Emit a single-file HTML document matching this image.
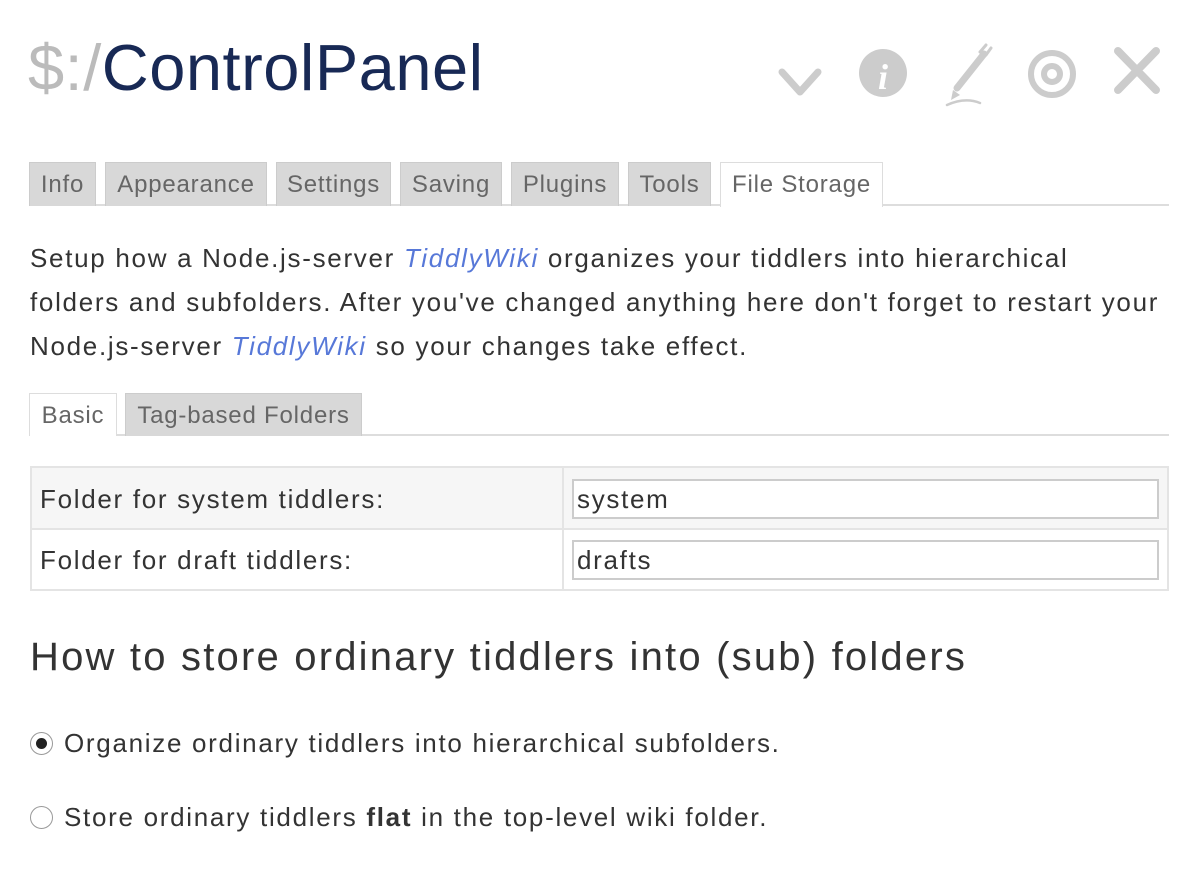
<!DOCTYPE html>
<html><head><meta charset="utf-8"><style>
*{box-sizing:border-box;margin:0;padding:0}
body{width:1194px;height:894px;background:#fff;font-family:"Liberation Sans",sans-serif;color:#333;position:relative;overflow:hidden}
.a{position:absolute;white-space:nowrap}
.tab{position:absolute;top:162px;height:44px;background:#d8d8d8;border:1px solid #ccc;border-bottom:none;font-size:24px;color:#666;line-height:44px;text-align:center;letter-spacing:0.8px}
.tab.sel{background:#fff;border-color:#ddd;height:45px}
.p{font-size:26px;color:#333;line-height:44px;letter-spacing:1.7px}
.lnk{color:#5778d8;font-style:italic}
</style></head><body>
<div class="a" style="left:28px;top:28px;font-size:65px;line-height:80px;letter-spacing:0.5px"><span style="color:#bbb">$:/</span><span style="color:#182955">ControlPanel</span></div>
<svg class="a" style="left:770px;top:40px" width="400" height="70" viewBox="0 0 400 70">
<g fill="none" stroke="#ccc" stroke-linecap="round" stroke-linejoin="round">
<path d="M12 32 L30 52 L48 32" stroke-width="7"/>
<path d="M187 48 L214 14" stroke-width="7"/>
<path d="M210 12 L216 5 M216 15 L221 8" stroke-width="3"/>
<path d="M177 65 Q195 57 210 63" stroke-width="2.5"/>
<circle cx="282" cy="34" r="21" stroke-width="6"/>
<circle cx="282" cy="34" r="8" stroke-width="6"/>
<path d="M348 11 L386 50 M386 11 L348 50" stroke-width="8"/>
</g>
<circle cx="113" cy="33" r="24" fill="#ccc"/>
<text x="113" y="49" font-family="Liberation Serif" font-style="italic" font-weight="bold" font-size="36" fill="#fff" text-anchor="middle">i</text>
<path d="M183 50 L190 55 L181 60 Z" fill="#ccc"/>
</svg>
<div class="a" style="left:29px;top:204px;width:1140px;height:2px;background:#ddd"></div>
<div class="tab" style="left:29px;width:67px">Info</div>
<div class="tab" style="left:105px;width:162px">Appearance</div>
<div class="tab" style="left:276px;width:115px">Settings</div>
<div class="tab" style="left:400px;width:102px">Saving</div>
<div class="tab" style="left:511px;width:108px">Plugins</div>
<div class="tab" style="left:628px;width:83px">Tools</div>
<div class="tab sel" style="left:720px;width:163px">File Storage</div>
<div class="a p" style="left:30px;top:236px">Setup how a Node.js-server <span class="lnk">TiddlyWiki</span> organizes your tiddlers into hierarchical</div>
<div class="a p" style="left:30px;top:280px">folders and subfolders. After you've changed anything here don't forget to restart your</div>
<div class="a p" style="left:30px;top:324px">Node.js-server <span class="lnk">TiddlyWiki</span> so your changes take effect.</div>
<div class="a" style="left:29px;top:434px;width:1140px;height:2px;background:#ddd"></div>
<div class="tab sel" style="left:29px;top:393px;width:88px;height:43px;line-height:44px">Basic</div>
<div class="tab" style="left:125px;top:393px;width:237px;height:43px;line-height:44px">Tag-based Folders</div>
<div class="a" style="left:30px;top:466px;width:1139px;height:125px;border:2px solid #e4e4e4"></div>
<div class="a" style="left:32px;top:468px;width:1135px;height:60px;background:#f6f6f6"></div>
<div class="a" style="left:32px;top:528px;width:1135px;height:2px;background:#e4e4e4"></div>
<div class="a" style="left:562px;top:468px;width:2px;height:121px;background:#e4e4e4"></div>
<div class="a p" style="left:40px;top:477px">Folder for system tiddlers:</div>
<div class="a p" style="left:40px;top:538px">Folder for draft tiddlers:</div>
<div class="a p" style="left:572px;top:479px;width:587px;height:40px;border:2px solid #ccc;background:#fff;line-height:36px;padding-left:3px">system</div>
<div class="a p" style="left:572px;top:540px;width:587px;height:40px;border:2px solid #ccc;background:#fff;line-height:36px;padding-left:3px">drafts</div>
<div class="a" style="left:30px;top:632px;font-size:40px;line-height:50px;color:#333;letter-spacing:2.2px">How to store ordinary tiddlers into (sub) folders</div>
<div class="a" style="left:30px;top:732px;width:23px;height:23px;border-radius:50%;border:1.5px solid #999;background:#fff"></div>
<div class="a" style="left:36px;top:738px;width:11px;height:11px;border-radius:50%;background:#222"></div>
<div class="a p" style="left:64px;top:721px">Organize ordinary tiddlers into hierarchical subfolders.</div>
<div class="a" style="left:30px;top:806px;width:23px;height:23px;border-radius:50%;border:1.5px solid #999;background:#fff"></div>
<div class="a p" style="left:64px;top:795px">Store ordinary tiddlers <b>flat</b> in the top-level wiki folder.</div>
</body></html>
